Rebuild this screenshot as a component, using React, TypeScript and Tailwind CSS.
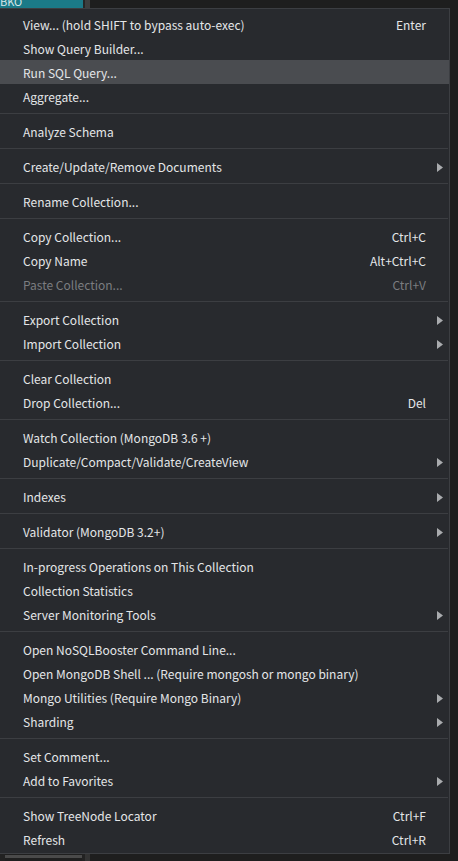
import React from 'react';

type Item = { label: string; shortcut?: string; sub?: boolean; disabled?: boolean; active?: boolean };

const groups: Item[][] = [
  [
    { label: 'View... (hold SHIFT to bypass auto-exec)', shortcut: 'Enter' },
    { label: 'Show Query Builder...' },
    { label: 'Run SQL Query...', active: true },
    { label: 'Aggregate...' },
  ],
  [{ label: 'Analyze Schema' }],
  [{ label: 'Create/Update/Remove Documents', sub: true }],
  [{ label: 'Rename Collection...' }],
  [
    { label: 'Copy Collection...', shortcut: 'Ctrl+C' },
    { label: 'Copy Name', shortcut: 'Alt+Ctrl+C' },
    { label: 'Paste Collection...', shortcut: 'Ctrl+V', disabled: true },
  ],
  [
    { label: 'Export Collection', sub: true },
    { label: 'Import Collection', sub: true },
  ],
  [
    { label: 'Clear Collection' },
    { label: 'Drop Collection...', shortcut: 'Del' },
  ],
  [
    { label: 'Watch Collection (MongoDB 3.6 +)' },
    { label: 'Duplicate/Compact/Validate/CreateView', sub: true },
  ],
  [{ label: 'Indexes', sub: true }],
  [{ label: 'Validator (MongoDB 3.2+)', sub: true }],
  [
    { label: 'In-progress Operations on This Collection' },
    { label: 'Collection Statistics' },
    { label: 'Server Monitoring Tools', sub: true },
  ],
  [
    { label: 'Open NoSQLBooster Command Line...' },
    { label: 'Open MongoDB Shell ... (Require mongosh or mongo binary)' },
    { label: 'Mongo Utilities (Require Mongo Binary)', sub: true },
    { label: 'Sharding', sub: true },
  ],
  [
    { label: 'Set Comment...' },
    { label: 'Add to Favorites', sub: true },
  ],
  [
    { label: 'Show TreeNode Locator', shortcut: 'Ctrl+F' },
    { label: 'Refresh', shortcut: 'Ctrl+R' },
  ],
];

const Arrow = () => (
  <svg width="6" height="9" viewBox="0 0 6 9" className="ml-[11px]">
    <path d="M0 0 L6 4.5 L0 9 Z" fill="#a9abae" />
  </svg>
);

const Row = ({ item }: { item: Item }) => (
  <div
    className={`flex h-6 items-center pl-[23px] pt-[2px] ${item.active ? 'bg-[#4a4c50]' : ''} ${
      item.disabled ? 'text-[#7b7d80]' : 'text-[#e4e6e8]'
    }`}
  >
    <span className="flex-1 whitespace-nowrap">{item.label}</span>
    {item.shortcut && <span className="whitespace-nowrap">{item.shortcut}</span>}
    <span className="flex w-[23px] items-center">{item.sub && <Arrow />}</span>
  </div>
);

export default function App() {
  return (
    <div
      className="flex h-[861px] w-[458px] flex-col overflow-hidden bg-[#1f1f1f] text-[12px]"
      style={{ fontFamily: '"Noto Sans CJK KR", "Noto Sans", sans-serif' }}
    >
      <div className="flex h-2 shrink-0">
        <div className="w-[83px] overflow-hidden bg-[#1b7a88] text-[11px] leading-[6px] text-[#d8e6e8]">
          <span className="relative -top-[2px]">BKO</span>
        </div>
        <div className="w-[2px] bg-[#262626]" />
        <div className="w-[5px] bg-[#3e3e3e]" />
        <div className="flex-1 bg-[#1e1e1e]" />
      </div>

      <div className="flex">
        <div className="w-[450px] border-r border-t border-b border-[#3c3e42] bg-[#282a2e] pt-[3px] pb-[2px]">
          {groups.map((g, gi) => (
            <div key={gi}>
              {gi > 0 && (
                <div className="py-[5px] pr-px">
                  <div className="h-px bg-[#3c3e42]" />
                </div>
              )}
              {g.map((it) => (
                <Row key={it.label} item={it} />
              ))}
            </div>
          ))}
        </div>
        <div className="flex-1 bg-[#1e1e1e]" />
      </div>

      <div className="flex flex-1">
        <div className="w-[5px] bg-[#222]" />
        <div className="mt-px h-[3px] w-[77px] bg-[#4a4a4a]" />
        <div className="w-[3px] bg-[#222]" />
        <div className="w-[5px] bg-[#333]" />
        <div className="flex-1 bg-[#1e1e1e]" />
      </div>
    </div>
  );
}
